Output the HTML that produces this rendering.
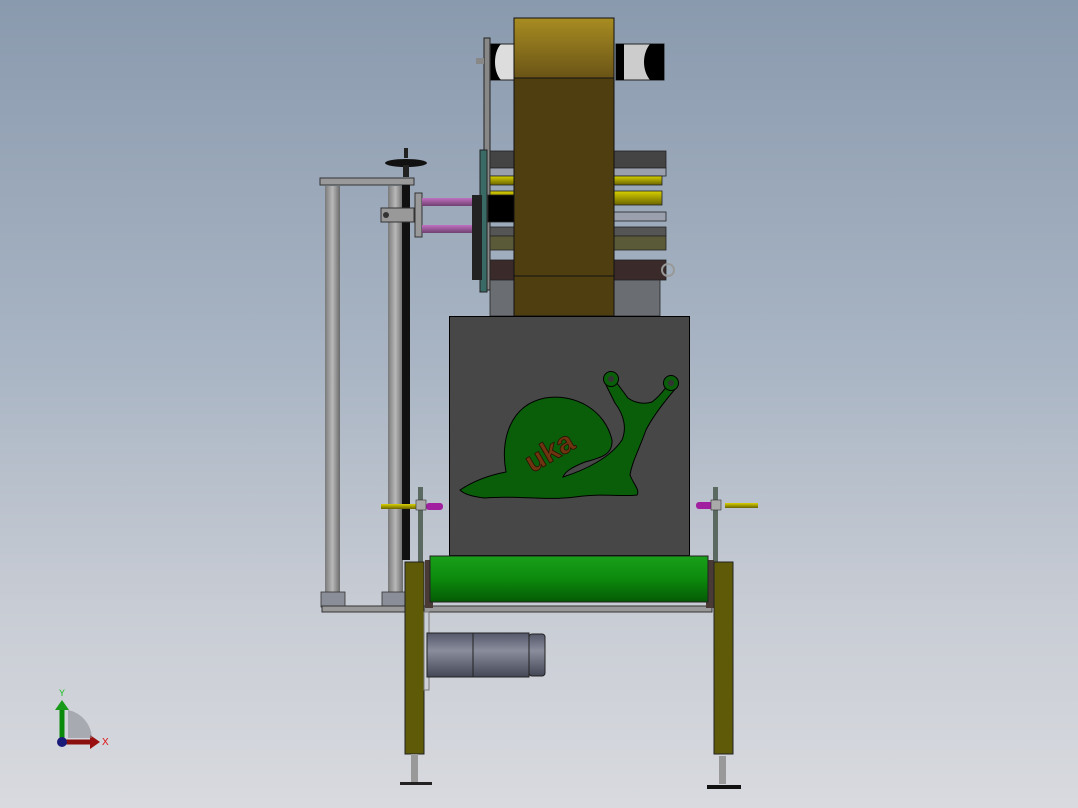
<!DOCTYPE html>
<html><head><meta charset="utf-8"><style>
html,body{margin:0;padding:0;width:1078px;height:808px;overflow:hidden}
body{background:linear-gradient(#8a9aae 0%,#a9b5c4 45%,#c8ccd4 75%,#d8dadf 100%)}
svg{position:absolute;left:0;top:0}
</style></head><body>
<svg width="1078" height="808" viewBox="0 0 1078 808" xmlns="http://www.w3.org/2000/svg" font-family="Liberation Sans, sans-serif">
<defs>
<linearGradient id="post" x1="0" x2="1"><stop offset="0" stop-color="#7a7a7a"/><stop offset=".5" stop-color="#b8b8b8"/><stop offset="1" stop-color="#6a6a6a"/></linearGradient>
<linearGradient id="gold" x1="0" y1="0" x2="0" y2="1"><stop offset="0" stop-color="#a88c22"/><stop offset="1" stop-color="#6a5416"/></linearGradient>
<linearGradient id="green" x1="0" y1="0" x2="0" y2="1"><stop offset="0" stop-color="#1aa01a"/><stop offset=".5" stop-color="#0c8a0c"/><stop offset="1" stop-color="#045a04"/></linearGradient>
<linearGradient id="yel" x1="0" y1="0" x2="0" y2="1"><stop offset="0" stop-color="#d8d000"/><stop offset="1" stop-color="#6a6400"/></linearGradient>
<linearGradient id="mot" x1="0" y1="0" x2="0" y2="1"><stop offset="0" stop-color="#55586a"/><stop offset=".4" stop-color="#8a8d9c"/><stop offset="1" stop-color="#444756"/></linearGradient>
<linearGradient id="pur" x1="0" y1="0" x2="0" y2="1"><stop offset="0" stop-color="#c070c0"/><stop offset="1" stop-color="#704070"/></linearGradient>
</defs>
<!-- stand -->
<rect x="325" y="186" width="15" height="410" fill="url(#post)"/>
<rect x="388" y="186" width="15" height="410" fill="url(#post)"/>
<rect x="320" y="178" width="94" height="7" fill="#9a9a9a" stroke="#333" stroke-width="1"/>
<rect x="402" y="185" width="8" height="375" fill="#111"/>
<ellipse cx="406" cy="163" rx="21" ry="4" fill="#111"/>
<rect x="403" y="165" width="6" height="12" fill="#222"/>
<rect x="404" y="148" width="4" height="10" fill="#222"/>
<rect x="321" y="592" width="24" height="15" fill="#8a8e98" stroke="#333" stroke-width=".8"/>
<rect x="382" y="592" width="24" height="15" fill="#8a8e98" stroke="#333" stroke-width=".8"/>
<rect x="322" y="606" width="390" height="6" fill="#999" stroke="#333" stroke-width="1"/>
<!-- clamp & purple rods -->
<rect x="381" y="208" width="33" height="14" fill="#999" stroke="#333"/>
<circle cx="386" cy="215" r="3" fill="#333"/>
<rect x="415" y="193" width="7" height="44" fill="#999" stroke="#333"/>
<rect x="422" y="198" width="66" height="8" fill="url(#pur)"/>
<rect x="422" y="225" width="66" height="8" fill="url(#pur)"/>
<!-- side plates -->
<rect x="484" y="38" width="6" height="252" fill="#888" stroke="#222"/>
<rect x="480" y="150" width="7" height="142" fill="#3a6a66" stroke="#222"/>
<rect x="472" y="195" width="10" height="85" fill="#222"/>
<rect x="476" y="58" width="8" height="6" fill="#888"/>
<!-- top rollers -->
<rect x="491" y="44" width="23" height="36" fill="#ddd" stroke="#222"/>
<path d="M491,44 h10 c-8,8 -8,28 0,36 h-10 Z" fill="#000"/>
<rect x="616" y="44" width="48" height="36" fill="#ccc" stroke="#222"/>
<path d="M616,44 h8 v36 h-8 Z M650,44 h14 v36 h-14 c-8,-10 -8,-26 0,-36 Z" fill="#000"/>
<!-- roller rows -->
<g stroke="#222" stroke-width=".8">
<rect x="490" y="151" width="24" height="17" fill="#444"/><rect x="614" y="151" width="52" height="17" fill="#444"/>
<rect x="490" y="168" width="24" height="8" fill="#9aa0ae"/><rect x="614" y="168" width="52" height="8" fill="#9aa0ae"/>
<rect x="490" y="176" width="24" height="9" fill="url(#yel)"/><rect x="614" y="176" width="48" height="9" fill="url(#yel)"/>
<rect x="490" y="191" width="24" height="10" fill="url(#yel)"/><rect x="614" y="191" width="48" height="14" fill="url(#yel)"/>
<rect x="488" y="195" width="26" height="27" fill="#000"/>
<rect x="614" y="212" width="52" height="9" fill="#9aa0ae"/>
<rect x="490" y="227" width="24" height="9" fill="#555"/><rect x="614" y="227" width="52" height="9" fill="#555"/>
<rect x="490" y="236" width="24" height="14" fill="#5a5a38"/><rect x="614" y="236" width="52" height="14" fill="#5a5a38"/>
<rect x="490" y="260" width="24" height="20" fill="#3a2a2a"/><rect x="614" y="260" width="52" height="20" fill="#3a2a2a"/>
<rect x="490" y="280" width="24" height="36" fill="#6a6d72"/><rect x="614" y="280" width="46" height="36" fill="#6a6d72"/>
</g>
<circle cx="668" cy="270" r="6" fill="none" stroke="#999" stroke-width="2"/>
<!-- belt -->
<rect x="514" y="18" width="100" height="60" fill="url(#gold)" stroke="#111"/>
<rect x="514" y="78" width="100" height="198" fill="#4f3e10" stroke="#111"/>
<rect x="514" y="276" width="100" height="40" fill="#4f3e10" stroke="#111"/>
<!-- box -->
<rect x="449.5" y="316.5" width="240" height="239" fill="#474747" stroke="#000"/>
<!-- snail -->
<path d="M460,490 C475,480 490,475 506,472 C500,440 510,405 545,398 C575,393 605,410 612,440 C613,455 600,458 585,462 C570,468 565,472 563,477 C585,470 610,458 622,440 C627,428 624,415 615,403 L606,385 L616,382 L628,398 C636,404 646,404 652,402 C660,396 664,390 667,386 L676,388 C664,402 652,418 646,430 C638,452 632,462 630,475 C634,485 640,490 637,495 C620,497 600,493 575,497 C545,501 515,495 485,498 C475,497 465,495 460,490 Z" fill="#0a5e0a" stroke="#000" stroke-width="1"/>
<circle cx="611" cy="379" r="7.5" fill="#0a5e0a" stroke="#000"/><circle cx="611" cy="379" r="3" fill="#333"/>
<circle cx="671" cy="383" r="7.5" fill="#0a5e0a" stroke="#000"/><circle cx="671" cy="383" r="3" fill="#333"/>
<text x="520" y="462" transform="rotate(-30 547 445)" font-size="30" font-weight="bold" fill="#6e3510" stroke="#2a1000" stroke-width=".8">uka</text>
<!-- screws -->
<rect x="418" y="487" width="5" height="75" fill="#5a6a60"/>
<rect x="713" y="487" width="5" height="75" fill="#5a6a60"/>
<rect x="381" y="504" width="36" height="5" fill="url(#yel)"/>
<rect x="725" y="503" width="33" height="5" fill="url(#yel)"/>
<rect x="426" y="503" width="17" height="7" rx="3" fill="#a020a0"/>
<rect x="696" y="502" width="17" height="7" rx="3" fill="#a020a0"/>
<rect x="416" y="500" width="10" height="10" fill="#aaa" stroke="#333" stroke-width=".6"/>
<rect x="711" y="500" width="10" height="10" fill="#aaa" stroke="#333" stroke-width=".6"/>
<!-- roller -->
<rect x="425" y="560" width="8" height="48" fill="#4a3a36"/>
<rect x="706" y="560" width="8" height="48" fill="#4a3a36"/>
<rect x="430" y="556" width="278" height="46" fill="url(#green)" stroke="#222"/>
<!-- legs -->
<rect x="405" y="562" width="19" height="192" fill="#5e5a08" stroke="#222"/>
<rect x="714" y="562" width="19" height="192" fill="#5e5a08" stroke="#222"/>
<rect x="411" y="754" width="7" height="28" fill="#999"/>
<rect x="400" y="782" width="32" height="3" fill="#222"/>
<rect x="719" y="756" width="7" height="28" fill="#999"/>
<rect x="707" y="785" width="34" height="4" fill="#111"/>
<!-- motor -->
<rect x="424" y="612" width="5" height="78" fill="none" stroke="#777"/>
<rect x="427" y="633" width="46" height="44" fill="url(#mot)" stroke="#222"/>
<rect x="473" y="633" width="56" height="44" fill="url(#mot)" stroke="#222"/>
<rect x="529" y="634" width="16" height="42" rx="3" fill="url(#mot)" stroke="#222"/>
<!-- axes -->
<path d="M62,742 L62,708" stroke="#0a8a0a" stroke-width="5"/>
<path d="M55,710 L62,700 L69,710 Z" fill="#1a9a1a"/>
<path d="M62,742 L92,742" stroke="#8a1010" stroke-width="5"/>
<path d="M90,735 L100,742 L90,749 Z" fill="#9a1010"/>
<path d="M68,710 A30,30 0 0 1 92,738 L68,738 Z" fill="#8a8e94" opacity=".6"/>
<circle cx="62" cy="742" r="5" fill="#1a1a7a"/>
<text x="59" y="696" font-size="9" fill="#10c010">Y</text>
<text x="102" y="745" font-size="10" fill="#e01010">X</text>
</svg>
</body></html>
